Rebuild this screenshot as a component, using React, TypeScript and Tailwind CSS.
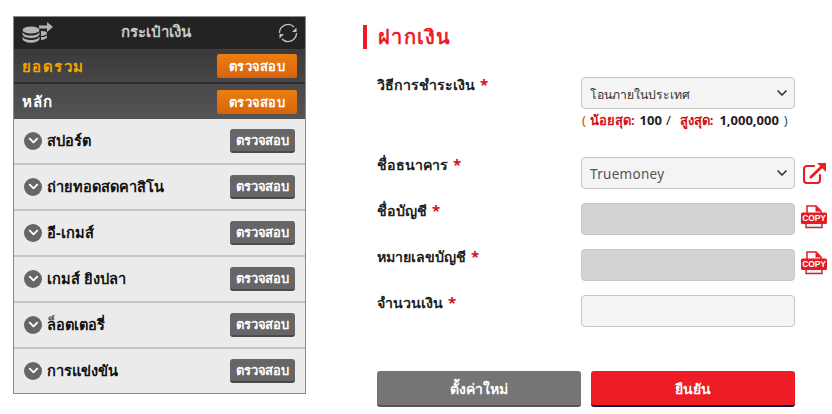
import React from "react";
import { ChevronDown } from "lucide-react";

function CheckBtn({ orange }: { orange?: boolean }) {
  if (orange) {
    return (
      <button className="w-[80px] h-[24px] rounded-[2px] bg-gradient-to-b from-[#ec7f12] to-[#d8620a] text-white text-[13px] font-bold tracking-[0.3px] leading-[24px] text-center">
        ตรวจสอบ
      </button>
    );
  }
  return (
    <button className="w-[65px] h-[24px] rounded-[3px] bg-[#666666] border-b-2 border-[#4a4a4a] text-white text-[13px] font-bold tracking-[-0.1px] leading-[22px] text-center">
      ตรวจสอบ
    </button>
  );
}

function Row({ label }: { label: string }) {
  return (
    <div className="h-[46px] last:h-[44px] flex items-center justify-between pl-[10px] pr-[10px] bg-[#ebebeb] border-b-2 border-[#c4c4c4] last:border-b-0">
      <div className="flex items-center gap-[5px]">
        <span className="w-[18px] h-[18px] rounded-full bg-[#666666] flex items-center justify-center">
          <ChevronDown size={15} strokeWidth={3} className="text-white" />
        </span>
        <span className="text-[14.6px] font-bold text-[#111111]">{label}</span>
      </div>
      <CheckBtn />
    </div>
  );
}

function Coins() {
  return (
    <svg width="32" height="22" viewBox="0 0 32 22" fill="#b4b4b4">
      <path d="M17 3.500h8V0l6 5-6 5V6.500h-8z" />
      <ellipse cx="9" cy="8" rx="8.500" ry="3.600" />
      <path d="M.5 10c1 2.500 4.500 3.600 8.500 3.600s7.500-1.100 8.500-3.600v2.500c-1 2.500-4.500 3.500-8.500 3.500s-7.500-1-8.500-3.500z" />
      <path d="M.5 14.500c1 2.500 4.500 3.500 8.500 3.500s7.500-1 8.500-3.500V17c-1 2.500-4.500 3.800-8.500 3.800S1.500 19.500.5 17z" />
      <path d="M19 9c3-.2 6 .6 6 2.300S22 14 19 14zM19 15c3 0 5-.5 6-1.800v2.300c-1 1.600-3 2.300-6 2.500z" />
    </svg>
  );
}

function Refresh() {
  return (
    <svg width="20" height="20" viewBox="0 0 20 20" fill="none" stroke="#c4c4c4" strokeWidth="1.300">
      <path d="M1.500 10a8.500 8.500 0 0 1 14.500-6" />
      <path d="M18.500 10a8.500 8.500 0 0 1-14.500 6" />
      <path d="M18.500 4.500V9h-4.500z" fill="#c4c4c4" stroke="none" />
      <path d="M1.500 15.500V11h4.500z" fill="#c4c4c4" stroke="none" />
    </svg>
  );
}

function Copy() {
  return (
    <span className="relative block w-[26px] h-[24px]">
      <svg width="26" height="24" viewBox="0 0 26 24" className="absolute inset-0">
        <path d="M6 1h9l5 5v3H6z" fill="#ffffff" stroke="#e31b23" strokeWidth="1.500" />
        <path d="M14.500 1v5.500H20z" fill="#e31b23" />
        <rect x="0" y="7.500" width="26" height="11.500" rx="1.500" fill="#e31b23" />
        <path d="M5 19v3.500h16V19" fill="#eeeeee" stroke="#b5303a" strokeWidth="1.500" />
      </svg>
      <span className="absolute left-0 right-0 top-[7px] text-center text-white text-[8.500px] tracking-[-0.2px] leading-[12px] font-bold font-['Liberation_Sans',sans-serif]">COPY</span>
    </span>
  );
}

function External() {
  return (
    <svg width="24" height="22" viewBox="0 0 24 22" fill="none" stroke="#ee1c25" strokeWidth="2.200" strokeLinecap="round" strokeLinejoin="round">
      <path d="M11 4H4a3 3 0 0 0-3 3v11a3 3 0 0 0 3 3h10a3 3 0 0 0 3-3v-5" />
      <path d="M8 15 20 3.500" strokeWidth="3" />
      <path d="M14 1h9v9z" fill="#ee1c25" stroke="none" />
    </svg>
  );
}

function Field({ label, children, after, h }: { label: string; children: React.ReactNode; after?: React.ReactNode; h: string }) {
  return (
    <div className={`flex items-start ${h}`}>
      <label className="w-[204px] text-[14.2px] font-bold text-[#222222] leading-[14px]">
        {label}
        <span className="text-[#d0121a] ml-[5px] text-[15px]">*</span>
      </label>
      <div className="w-[214px]">{children}</div>
      {after}
    </div>
  );
}

const box = "w-[214px] h-[32px] rounded-[4px] border border-[#c6c6c6] flex items-center";

export default function App() {
  return (
    <div className="w-[832px] h-[414px] overflow-hidden bg-white flex items-start font-['Noto_Sans','Tahoma','Liberation_Sans',sans-serif]">
      <aside className="ml-[13px] mt-[16px] w-[293px] border border-[#8a8a8a] shrink-0">
        <div className="h-[32px] bg-[#232323] flex items-center pl-[8px] pr-[7px]">
          <Coins />
          <span className="flex-1 text-center text-[15px] font-bold text-[#c8c8c8] pr-[8px] pb-[3px]">กระเป๋าเงิน</span>
          <span className="w-[32px] flex justify-end"><Refresh /></span>
        </div>
        <div className="h-[35px] bg-gradient-to-b from-[#3a3a3a] to-[#474747] border-t border-[#3f3f3f] border-b-2 border-b-[#2e2e2e] flex items-center justify-between pl-[8px] pr-[8px]">
          <span className="text-[15px] font-bold text-[#f5a200] tracking-[1.4px]">ยอดรวม</span>
          <CheckBtn orange />
        </div>
        <div className="h-[35px] bg-gradient-to-b from-[#484848] to-[#555555] flex items-center justify-between pl-[8px] pr-[8px]">
          <span className="text-[15px] font-bold text-white tracking-[1px]">หลัก</span>
          <CheckBtn orange />
        </div>
        <Row label="สปอร์ต" />
        <Row label="ถ่ายทอดสดคาสิโน" />
        <Row label="อี-เกมส์" />
        <Row label="เกมส์ ยิงปลา" />
        <Row label="ล็อตเตอรี่" />
        <Row label="การแข่งขัน" />
      </aside>

      <main className="ml-[57px] mt-[25px] w-[470px]">
        <h1 className="border-l-4 border-[#ee1c25] pl-[11px] h-[24px] leading-[24px] text-[20px] font-bold text-[#ee1c25] tracking-[1.300px]">ฝากเงิน</h1>
        <div className="pl-[14px] mt-[28px]">
          <Field label="วิธีการชำระเงิน" h="h-[80px]">
            <div className={`${box} bg-[#f4f4f4] justify-between pl-[8px] pr-[4px] text-[12.200px] text-[#333333]`}>
              <span className="pt-[4px]">โอนภายในประเทศ</span>
              <ChevronDown size={16} strokeWidth={2.500} className="text-[#333333]" />
            </div>
            <p className="mt-[1px] flex items-center text-[13px] leading-[20px] font-bold whitespace-nowrap text-[#222222]">
              <span className="text-[#b8520a] font-normal ml-[1px]">(</span>
              <span className="text-[#d0121a] ml-[4px]">น้อยสุด:</span>
              <span className="ml-[5px]">100</span>
              <span className="ml-[4px] font-normal">/</span>
              <span className="text-[#d0121a] ml-[9px]">สูงสุด:</span>
              <span className="ml-[6px]">1,000,000</span>
              <span className="ml-[5px] font-normal text-[#1f4e79]">)</span>
            </p>
          </Field>
          <Field
            label="ชื่อธนาคาร"
            h="h-[46px]"
            after={<span className="ml-[8px] mt-[5px]"><External /></span>}
          >
            <div className={`${box} bg-[#f4f4f4] justify-between pl-[8px] pr-[4px] text-[13.500px] tracking-[0.3px] text-[#555555]`}>
              <span className="pt-[2px]">Truemoney</span>
              <ChevronDown size={16} strokeWidth={2.500} className="text-[#333333]" />
            </div>
          </Field>
          <Field label="ชื่อบัญชี" h="h-[46px]" after={<span className="ml-[6px] mt-[2px]"><Copy /></span>}>
            <div className={`${box} bg-[#d3d3d3] border-[#acacac]`} />
          </Field>
          <Field label="หมายเลขบัญชี" h="h-[46px]" after={<span className="ml-[6px] mt-[2px]"><Copy /></span>}>
            <div className={`${box} bg-[#d3d3d3] border-[#acacac]`} />
          </Field>
          <Field label="จำนวนเงิน" h="h-[76px]">
            <div className={`${box} bg-[#f4f4f4]`} />
          </Field>
          <div className="flex gap-[10px]">
            <button className="w-[204px] h-[36px] rounded-[3px] bg-[#757575] border-b-2 border-[#555555] text-white text-[14px] font-bold">ตั้งค่าใหม่</button>
            <button className="w-[204px] h-[36px] rounded-[3px] bg-[#ee1c25] border-b-2 border-[#101050] text-white text-[14px] font-bold">ยืนยัน</button>
          </div>
        </div>
      </main>
    </div>
  );
}
